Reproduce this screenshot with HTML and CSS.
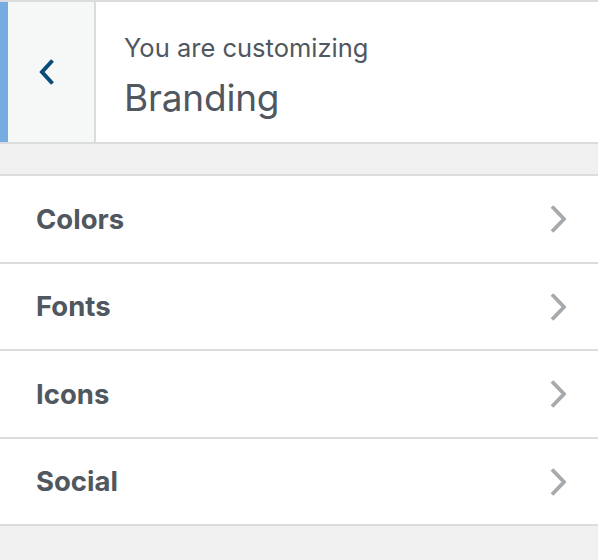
FILE: index.html
```html
<!DOCTYPE html>
<html>
<head>
<meta charset="utf-8">
<link rel="stylesheet" href="styles.css">
</head>
<body>
<div class="panel">
  <div class="header">
    <button class="back" aria-label="Back">
      <svg width="16" height="26" viewBox="0 0 16 26"><polyline points="13.5,1.5 3,13 13.5,24.5" fill="none" stroke="#0a4b78" stroke-width="4" stroke-linejoin="miter"/></svg>
    </button>
    <div class="title">
      <span class="action">You are customizing</span>
      <h3 class="name">Branding</h3>
    </div>
  </div>
  <div class="spacer"></div>
  <ul class="sections">
    <li class="section"><span>Colors</span><svg class="chev" width="16" height="28" viewBox="0 0 16 28"><polyline points="2,1.5 14,14 2,26.5" fill="none" stroke="#a7aaad" stroke-width="3.8"/></svg></li>
    <li class="section"><span>Fonts</span><svg class="chev" width="16" height="28" viewBox="0 0 16 28"><polyline points="2,1.5 14,14 2,26.5" fill="none" stroke="#a7aaad" stroke-width="3.8"/></svg></li>
    <li class="section"><span>Icons</span><svg class="chev" width="16" height="28" viewBox="0 0 16 28"><polyline points="2,1.5 14,14 2,26.5" fill="none" stroke="#a7aaad" stroke-width="3.8"/></svg></li>
    <li class="section"><span>Social</span><svg class="chev" width="16" height="28" viewBox="0 0 16 28"><polyline points="2,1.5 14,14 2,26.5" fill="none" stroke="#a7aaad" stroke-width="3.8"/></svg></li>
  </ul>
</div>
</body>
</html>
```
FILE: styles.css
```css
html, body {
  margin: 0;
  padding: 0;
  background: #f0f0f1;
  font-family: Inter, "Liberation Sans", sans-serif;
  color: #50575e;
}
.panel {
  width: 598px;
}
.header {
  display: flex;
  height: 140px;
  background: #fff;
  border-top: 2px solid #dcdcde;
  border-bottom: 2px solid #dcdcde;
}
.back {
  width: 96px;
  height: 140px;
  box-sizing: border-box;
  margin: 0;
  padding: 0 8px 0 0;
  background: #f6f7f7;
  border: none;
  border-left: 8px solid #76acdf;
  border-right: 2px solid #dcdcde;
  display: flex;
  align-items: center;
  justify-content: center;
}
.title {
  display: flex;
  flex-direction: column;
  padding: 30px 0 0 28px;
}
.action {
  font-size: 25.5px;
  line-height: 32px;
  font-weight: 400;
}
.name {
  margin: 12px 0 0 0;
  font-size: 37px;
  line-height: 44px;
  font-weight: 400;
  letter-spacing: -0.2px;
}
.spacer {
  height: 30px;
}
.sections {
  list-style: none;
  margin: 0;
  padding: 0;
  background: #fff;
  border-top: 2px solid #dcdcde;
}
.section {
  height: 85.5px;
  display: flex;
  align-items: center;
  justify-content: space-between;
  padding: 0 32px 0 36px;
  border-bottom: 2px solid #dcdcde;
  font-size: 27.5px;
  font-weight: 700;
}
.chev {
  display: block;
  margin-top: 1px;
}
```
